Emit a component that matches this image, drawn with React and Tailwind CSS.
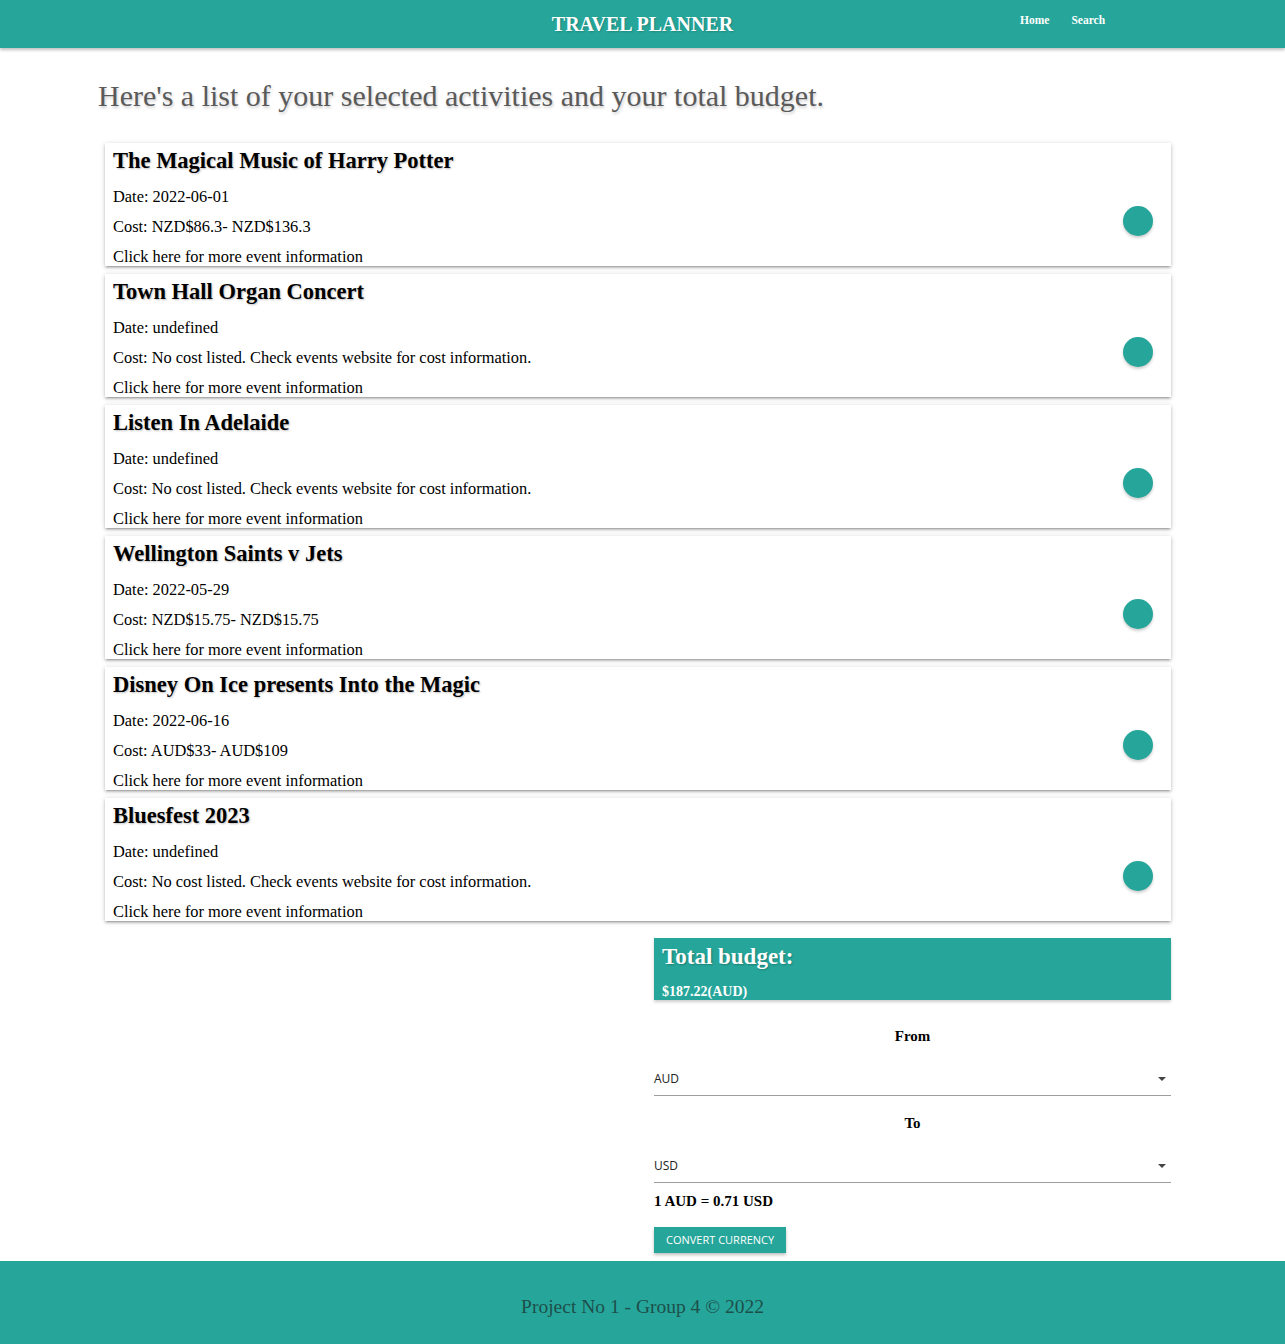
import React from "react";

const events = [
  { title: "The Magical Music of Harry Potter", date: "2022-06-01", cost: "NZD$86.3- NZD$136.3" },
  { title: "Town Hall Organ Concert", date: "undefined", cost: "No cost listed. Check events website for cost information." },
  { title: "Listen In Adelaide", date: "undefined", cost: "No cost listed. Check events website for cost information." },
  { title: "Wellington Saints v Jets", date: "2022-05-29", cost: "NZD$15.75- NZD$15.75" },
  { title: "Disney On Ice presents Into the Magic", date: "2022-06-16", cost: "AUD$33- AUD$109" },
  { title: "Bluesfest 2023", date: "undefined", cost: "No cost listed. Check events website for cost information." },
];

const serif = "font-['Liberation_Serif','DejaVu_Serif',serif]";

function Card({ e }) {
  return (
    <div className="relative bg-white shadow-[0_2px_2px_0_rgba(0,0,0,0.14),0_3px_1px_-2px_rgba(0,0,0,0.12),0_1px_5px_0_rgba(0,0,0,0.2)] h-[123px] px-2 pt-[3px] overflow-hidden">
      <h3 className="text-[22.5px] font-bold leading-[30px] text-black [text-shadow:1px_1px_2px_rgba(0,0,0,0.25)]">{e.title}</h3>
      <p className="text-[16.4px] leading-[30px] mt-[6px] text-black">Date: {e.date}</p>
      <p className="text-[16.4px] leading-[30px] text-black">Cost: {e.cost}</p>
      <p className="text-[16.4px] leading-[30px] text-black">Click here for more event information</p>
      <div className="absolute right-[18px] top-[63px] w-[30px] h-[30px] rounded-full bg-[#26a69a] shadow-[0_2px_3px_rgba(0,0,0,0.2)]" />
    </div>
  );
}

function Select({ value }) {
  return (
    <div className="flex items-center justify-between h-[34px] border-b border-[#9e9e9e] font-['Open_Sans',sans-serif] text-[12px] text-[#222]">
      <span>{value}</span>
      <svg width="10" height="6" viewBox="0 0 10 6" className="mr-[4px]"><path d="M1 1 L5 5 L9 1 Z" fill="#444" /></svg>
    </div>
  );
}

export default function App() {
  return (
    <div className={`${serif} bg-white min-h-[1344px] flex flex-col`}>
      <nav className="relative h-[48px] bg-[#26a69a] shadow-[0_2px_3px_rgba(0,0,0,0.25)] flex items-center justify-center">
        <span className="text-white font-bold text-[20px] [text-shadow:1px_1px_2px_rgba(0,0,0,0.2)]">TRAVEL PLANNER</span>
        <div className="absolute left-[1020px] top-[12px] flex gap-[22px] text-white font-bold text-[11.5px]">
          <span>Home</span>
          <span>Search</span>
        </div>
      </nav>

      <main className="flex-1 pt-[29px]">
        <h2 className="ml-[98px] text-[30px] leading-[38px] text-[#5a5a5a] [text-shadow:1px_2px_3px_rgba(0,0,0,0.2)]">
          Here's a list of your selected activities and your total budget.
        </h2>

        <div className="ml-[105px] w-[1066px] mt-[28px] flex flex-col gap-[8px]">
          {events.map((e, i) => (
            <Card key={i} e={e} />
          ))}
        </div>

        <div className="ml-[654px] w-[517px] mt-[17px] pb-[8px]">
          <div className="bg-[#26a69a] h-[62px] px-[8px] pt-[4px] shadow-[0_2px_3px_rgba(0,0,0,0.2)]">
            <div className="text-white font-bold text-[23px] leading-[30px] [text-shadow:1px_1px_2px_rgba(0,0,0,0.25)]">Total budget:</div>
            <div className="text-white font-bold text-[14px] leading-[20px] mt-[10px]">$187.22(AUD)</div>
          </div>
          <div className="text-center font-bold text-[15px] text-black mt-[26px] leading-[20px]">From</div>
          <div className="mt-[16px]"><Select value="AUD" /></div>
          <div className="text-center font-bold text-[15px] text-black mt-[17px] leading-[20px]">To</div>
          <div className="mt-[16px]"><Select value="USD" /></div>
          <div className="font-bold text-[15px] text-black mt-[8px] leading-[20px]">1 AUD = 0.71 USD</div>
          <button className="mt-[16px] h-[26px] px-[12px] bg-[#26a69a] text-white text-[11px] font-['Open_Sans',sans-serif] uppercase shadow-[0_2px_3px_rgba(0,0,0,0.25)]">
            Convert Currency
          </button>
        </div>
      </main>

      <footer className="h-[83px] bg-[#26a69a] flex items-center justify-center pt-[8px]">
        <span className="text-[19.5px] text-[#1d4f4b]">Project No 1 - Group 4 © 2022</span>
      </footer>
    </div>
  );
}
